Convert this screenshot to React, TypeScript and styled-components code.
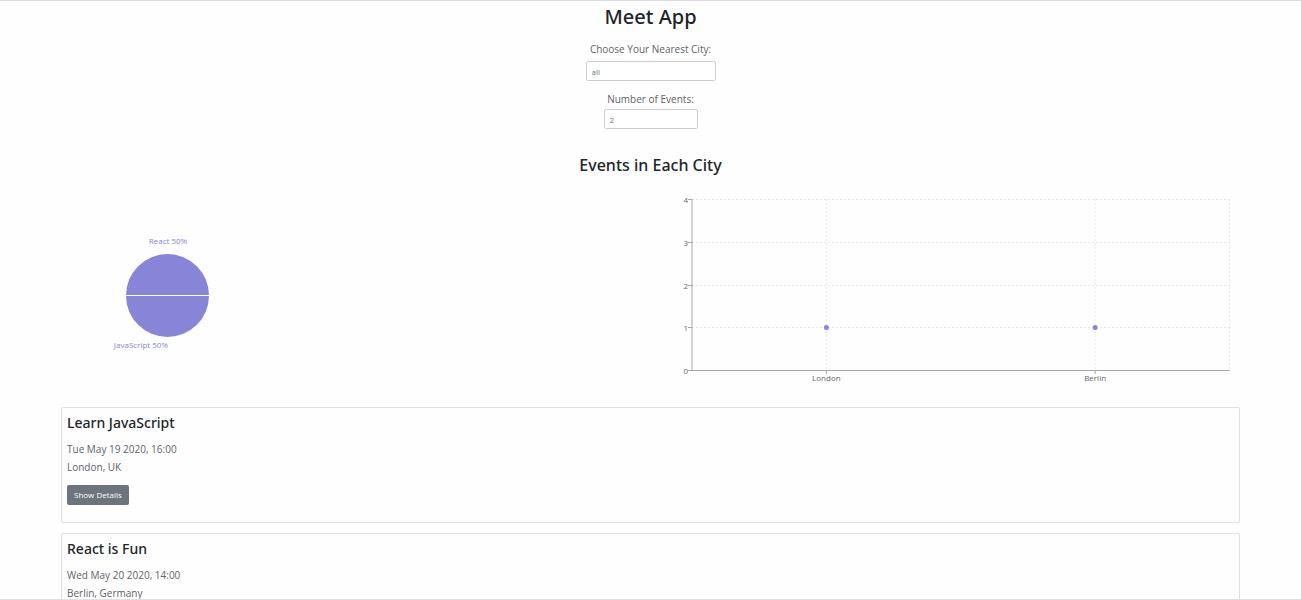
import React from "react";
import styled, { createGlobalStyle } from "styled-components";

const GlobalStyle = createGlobalStyle`
  * { box-sizing: border-box; }
  html { height: 100%; overflow: hidden; }
  body {
    margin: 0;
    background: #fefefe;
    color: #212529;
    font-family: "Segoe UI", "Open Sans", "Noto Sans", sans-serif;
    font-size: 10px;
    line-height: 18px;
  }
  h1, h2, h3 {
    font-family: "Segoe UI", "Noto Sans", "Open Sans", sans-serif;
    font-weight: 500;
  }
`;

const Page = styled.div`
  border-top: 1px solid #dcdbe2;
  display: flex;
  flex-direction: column;
`;

const Title = styled.h1`
  margin: 2px 0 0;
  font-size: 20px;
  line-height: 28px;
  text-align: center;
`;

const Field = styled.div<{ $gap: number; $top: number }>`
  display: flex;
  flex-direction: column;
  align-items: center;
  gap: ${(p) => p.$gap}px;
  margin-top: ${(p) => p.$top}px;
`;

const Label = styled.label`
  color: #5f6368;
`;

const Input = styled.input<{ $width: number }>`
  width: ${(p) => p.$width}px;
  height: 20px;
  padding: 0 5px;
  border: 1px solid #ced0d3;
  border-radius: 2px;
  background: #fff;
  color: #70757a;
  font: inherit;
  font-size: 8px;
`;

const SectionTitle = styled.h2`
  margin: 25px 0 0;
  font-size: 16px;
  line-height: 22px;
  text-align: center;
`;

const Charts = styled.section`
  display: grid;
  grid-template-columns: 1fr 1fr;
  margin: 23px 61px 0;
`;

const ChartSvg = styled.svg`
  display: block;
  width: 100%;
  height: 172px;
  overflow: visible;
  font-size: 8px;
`;

const PlotArea = styled.div`
  padding: 0 11px 0 41px;
`;

const Events = styled.ul`
  display: flex;
  flex-direction: column;
  gap: 10px;
  margin: 36px 61px 0;
  padding: 0;
  list-style: none;
`;

const Card = styled.li`
  padding: 5px 5px 17px;
  border: 1px solid #dedfe0;
  border-radius: 2px;
`;

const CardTitle = styled.h3`
  margin: 0 0 7px;
  font-size: 14px;
  line-height: 20px;
`;

const CardLine = styled.p`
  margin: 0;
  color: #5f6368;
`;

const DetailsButton = styled.button`
  display: block;
  height: 20px;
  margin-top: 9px;
  padding: 0 7px;
  border: 0;
  border-radius: 2px;
  background: #6c757d;
  color: #fff;
  font: inherit;
  font-size: 8px;
  font-weight: 500;
`;

const BottomEdge = styled.div`
  position: fixed;
  right: 0;
  bottom: 0;
  left: 0;
  height: 1px;
  background: #e0e0e3;
`;

const PLOT_HEIGHT = 171;
const yTicks = [0, 1, 2, 3, 4];
const cities = [
  { name: "London", x: "25%", count: 1 },
  { name: "Berlin", x: "75%", count: 1 },
];
const yFor = (value: number) => Math.round(PLOT_HEIGHT - (value * PLOT_HEIGHT) / 4) + 0.5;

const events = [
  { title: "Learn JavaScript", date: "Tue May 19 2020, 16:00", place: "London, UK" },
  { title: "React is Fun", date: "Wed May 20 2020, 14:00", place: "Berlin, Germany" },
];

function GenrePie() {
  return (
    <ChartSvg role="img" aria-label="Events by genre" fill="#8884d8">
      <circle cx="106.5" cy="96.5" r="41.5" />
      <line x1="65" x2="148" y1="96.5" y2="96.5" stroke="#fff" />
      <text x="107" y="45" textAnchor="middle">React 50%</text>
      <text x="107" y="149" textAnchor="end">JavaScript 50%</text>
    </ChartSvg>
  );
}

function CityScatter() {
  return (
    <ChartSvg role="img" aria-label="Events per city">
      <g stroke="#e6e6e6" strokeDasharray="2 2">
        {yTicks.slice(1).map((t) => (
          <line key={t} x1="0" x2="100%" y1={yFor(t)} y2={yFor(t)} />
        ))}
        {cities.map((c) => (
          <line key={c.name} x1={c.x} x2={c.x} y1="0" y2={PLOT_HEIGHT} />
        ))}
        <line x1="100%" x2="100%" y1="0" y2={PLOT_HEIGHT} />
      </g>
      <g stroke="#a6a6a6">
        <line x1="0" x2="0" y1="0" y2={PLOT_HEIGHT + 1} />
        <line x1="0" x2="100%" y1={yFor(0)} y2={yFor(0)} />
        {yTicks.map((t) => (
          <line key={t} x1="-4" x2="0" y1={yFor(t)} y2={yFor(t)} />
        ))}
        {cities.map((c) => (
          <line key={c.name} x1={c.x} x2={c.x} y1={PLOT_HEIGHT} y2={PLOT_HEIGHT + 4} />
        ))}
      </g>
      <g fill="#666">
        {yTicks.map((t) => (
          <text key={t} x="-4" y={yFor(t) + 3} textAnchor="end">{t}</text>
        ))}
        {cities.map((c) => (
          <text key={c.name} x={c.x} y={PLOT_HEIGHT + 11} textAnchor="middle">{c.name}</text>
        ))}
      </g>
      {cities.map((c) => (
        <circle key={c.name} cx={c.x} cy={yFor(c.count)} r="2.5" fill="#8884d8" />
      ))}
    </ChartSvg>
  );
}

export default function App() {
  return (
    <Page>
      <GlobalStyle />
      <Title>Meet App</Title>
      <Field $top={9} $gap={3}>
        <Label htmlFor="city">Choose Your Nearest City:</Label>
        <Input id="city" type="text" defaultValue="all" $width={130} />
      </Field>
      <Field $top={9} $gap={1}>
        <Label htmlFor="count">Number of Events:</Label>
        <Input id="count" type="text" inputMode="numeric" defaultValue="2" $width={94} />
      </Field>
      <SectionTitle>Events in Each City</SectionTitle>
      <Charts>
        <GenrePie />
        <PlotArea>
          <CityScatter />
        </PlotArea>
      </Charts>
      <Events>
        {events.map((e) => (
          <Card key={e.title}>
            <CardTitle>{e.title}</CardTitle>
            <CardLine>{e.date}</CardLine>
            <CardLine>{e.place}</CardLine>
            <DetailsButton type="button">Show Details</DetailsButton>
          </Card>
        ))}
      </Events>
      <BottomEdge />
    </Page>
  );
}
